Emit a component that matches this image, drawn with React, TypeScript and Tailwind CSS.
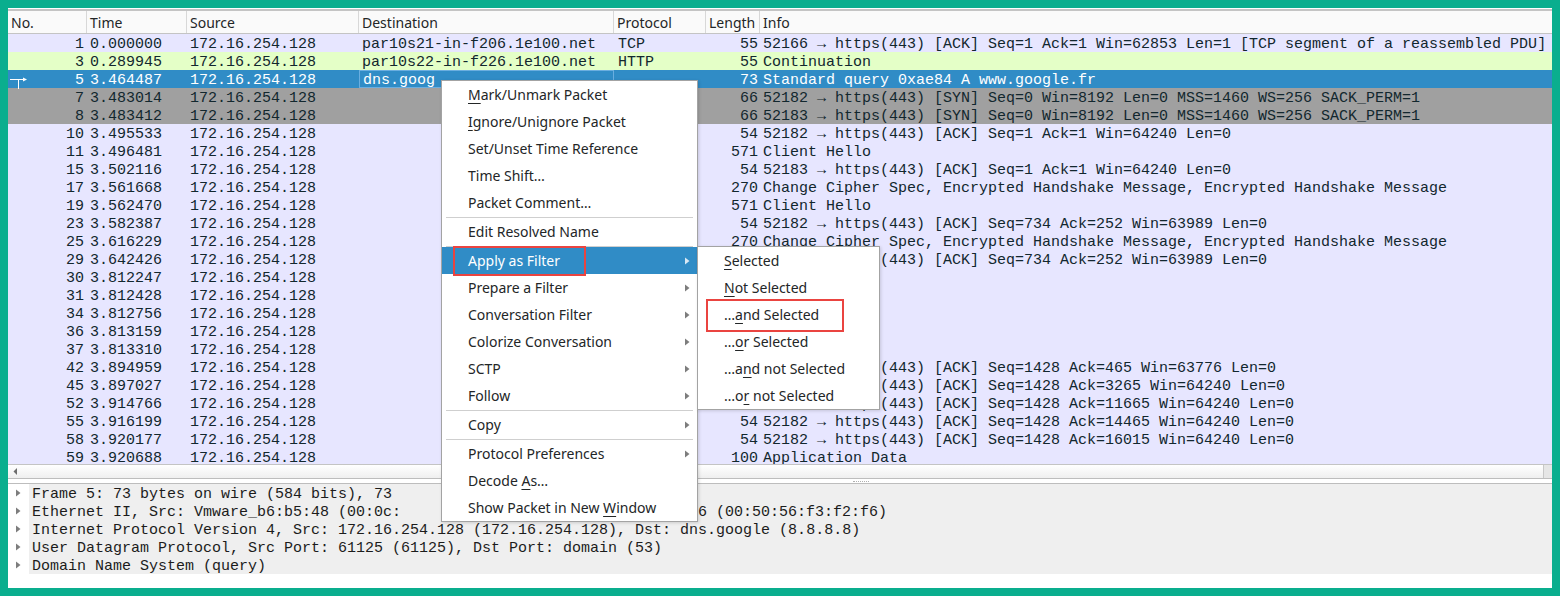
import React from "react";

type Kind = "tcp" | "http" | "sel" | "syn";

type Packet = {
  no: string;
  time: string;
  dst: string;
  proto: string;
  len: string;
  info: string;
  kind: Kind;
};

const SRC = "172.16.254.128";

const packets: Packet[] = [
  { no: "1", time: "0.000000", dst: "par10s21-in-f206.1e100.net", proto: "TCP", len: "55", info: "52166 → https(443) [ACK] Seq=1 Ack=1 Win=62853 Len=1 [TCP segment of a reassembled PDU]", kind: "tcp" },
  { no: "3", time: "0.289945", dst: "par10s22-in-f226.1e100.net", proto: "HTTP", len: "55", info: "Continuation", kind: "http" },
  { no: "5", time: "3.464487", dst: "dns.goog", proto: "", len: "73", info: "Standard query 0xae84 A www.google.fr", kind: "sel" },
  { no: "7", time: "3.483014", dst: "", proto: "TCP", len: "66", info: "52182 → https(443) [SYN] Seq=0 Win=8192 Len=0 MSS=1460 WS=256 SACK_PERM=1", kind: "syn" },
  { no: "8", time: "3.483412", dst: "", proto: "TCP", len: "66", info: "52183 → https(443) [SYN] Seq=0 Win=8192 Len=0 MSS=1460 WS=256 SACK_PERM=1", kind: "syn" },
  { no: "10", time: "3.495533", dst: "", proto: "TCP", len: "54", info: "52182 → https(443) [ACK] Seq=1 Ack=1 Win=64240 Len=0", kind: "tcp" },
  { no: "11", time: "3.496481", dst: "", proto: "TLSv1.2", len: "571", info: "Client Hello", kind: "tcp" },
  { no: "15", time: "3.502116", dst: "", proto: "TCP", len: "54", info: "52183 → https(443) [ACK] Seq=1 Ack=1 Win=64240 Len=0", kind: "tcp" },
  { no: "17", time: "3.561668", dst: "", proto: "TLSv1.2", len: "270", info: "Change Cipher Spec, Encrypted Handshake Message, Encrypted Handshake Message", kind: "tcp" },
  { no: "19", time: "3.562470", dst: "", proto: "TLSv1.2", len: "571", info: "Client Hello", kind: "tcp" },
  { no: "23", time: "3.582387", dst: "", proto: "TCP", len: "54", info: "52182 → https(443) [ACK] Seq=734 Ack=252 Win=63989 Len=0", kind: "tcp" },
  { no: "25", time: "3.616229", dst: "", proto: "TLSv1.2", len: "270", info: "Change Cipher Spec, Encrypted Handshake Message, Encrypted Handshake Message", kind: "tcp" },
  { no: "29", time: "3.642426", dst: "", proto: "TCP", len: "54", info: "52183 → https(443) [ACK] Seq=734 Ack=252 Win=63989 Len=0", kind: "tcp" },
  { no: "30", time: "3.812247", dst: "", proto: "TLSv1.2", len: "", info: "", kind: "tcp" },
  { no: "31", time: "3.812428", dst: "", proto: "TLSv1.2", len: "", info: "", kind: "tcp" },
  { no: "34", time: "3.812756", dst: "", proto: "TLSv1.2", len: "", info: "", kind: "tcp" },
  { no: "36", time: "3.813159", dst: "", proto: "TLSv1.2", len: "", info: "", kind: "tcp" },
  { no: "37", time: "3.813310", dst: "", proto: "TLSv1.2", len: "", info: "", kind: "tcp" },
  { no: "42", time: "3.894959", dst: "", proto: "TCP", len: "54", info: "52182 → https(443) [ACK] Seq=1428 Ack=465 Win=63776 Len=0", kind: "tcp" },
  { no: "45", time: "3.897027", dst: "", proto: "TCP", len: "54", info: "52182 → https(443) [ACK] Seq=1428 Ack=3265 Win=64240 Len=0", kind: "tcp" },
  { no: "52", time: "3.914766", dst: "", proto: "TCP", len: "54", info: "52182 → https(443) [ACK] Seq=1428 Ack=11665 Win=64240 Len=0", kind: "tcp" },
  { no: "55", time: "3.916199", dst: "", proto: "TCP", len: "54", info: "52182 → https(443) [ACK] Seq=1428 Ack=14465 Win=64240 Len=0", kind: "tcp" },
  { no: "58", time: "3.920177", dst: "", proto: "TCP", len: "54", info: "52182 → https(443) [ACK] Seq=1428 Ack=16015 Win=64240 Len=0", kind: "tcp" },
  { no: "59", time: "3.920688", dst: "", proto: "TLSv1.2", len: "100", info: "Application Data", kind: "tcp" },
];

const rowColor: Record<Kind, string> = {
  tcp: "bg-[#e7e6ff] text-[#12272e]",
  http: "bg-[#e4ffc7] text-[#12272e]",
  syn: "bg-[#a0a0a0] text-[#12272e]",
  sel: "bg-[#308cc6] text-white",
};

// [visible text, text resuming right of the context menu]
const details: [string, string][] = [
  ["Frame 5: 73 bytes on wire (584 bits), 73", ""],
  ["Ethernet II, Src: Vmware_b6:b5:48 (00:0c:", "6 (00:50:56:f3:f2:f6)"],
  ["Internet Protocol Version 4, Src: 172.16.254.128 (172.16.254.128), Dst: dns.google (8.8.8.8)", ""],
  ["User Datagram Protocol, Src Port: 61125 (61125), Dst Port: domain (53)", ""],
  ["Domain Name System (query)", ""],
];

const cols = "grid grid-cols-[79px_100px_172px_255px_92px_54px_1fr]";

function Arrow({ white }: { white?: boolean }) {
  return (
    <svg width="5" height="8" viewBox="0 0 5 8" className="shrink-0">
      <path d="M0 0.5 L4.5 4 L0 7.5 Z" fill={white ? "#d8e8f4" : "#7d7d7d"} />
    </svg>
  );
}

function RelatedIcon() {
  return (
    <svg width="20" height="18" viewBox="0 0 20 18" className="shrink-0">
      <path d="M2 8.5 H16" stroke="white" strokeWidth="1" />
      <path d="M10.5 8.5 V18" stroke="white" strokeWidth="1" />
      <path d="M15 6.5 L19 8.5 L15 10.5 Z" fill="white" />
    </svg>
  );
}

function Mn({ children }: { children: React.ReactNode }) {
  return <span className="underline decoration-1 underline-offset-[3px]">{children}</span>;
}

function MenuItem({
  children,
  arrow,
  active,
}: {
  children: React.ReactNode;
  arrow?: boolean;
  active?: boolean;
}) {
  return (
    <div
      className={`flex h-[27px] items-center justify-between pl-[26px] pr-[7px] ${
        active ? "bg-[#308cc6] text-white" : "text-[#232627]"
      }`}
    >
      <span className="whitespace-pre">{children}</span>
      {arrow && <Arrow white={active} />}
    </div>
  );
}

function Sep() {
  return (
    <div className="flex h-[2px] items-center px-[4px]">
      <div className="h-px w-full bg-[#cfcfcf]" />
    </div>
  );
}

export default function App() {
  return (
    <div className="relative h-[596px] w-[1560px] overflow-hidden bg-[#0aae8e] p-2">
      <div className="flex h-full flex-col bg-white pt-px font-['Liberation_Mono',monospace] text-[15px]">
        {/* column header */}
        <div
          className={`${cols} h-[25px] shrink-0 border-t-2 border-b border-[#c4c4c4] bg-[#fafafa] font-['Noto_Sans',sans-serif] text-[14px] text-[#232627]`}
        >
          {["No.", "Time", "Source", "Destination", "Protocol", "Length", "Info"].map((h, i) => (
            <div
              key={h}
              className={`flex items-center pl-[3px] pt-px ${i < 6 ? "border-r border-[#d8d8d8]" : ""}`}
            >
              {h}
            </div>
          ))}
        </div>

        {/* packet list */}
        <div className="h-[430px] shrink-0 overflow-hidden">
          {packets.map((p) => (
            <div key={p.no} className={`${cols} h-[18px] pt-px leading-[19px] ${rowColor[p.kind]}`}>
              <div className="flex justify-between pr-[3px]">
                {p.kind === "sel" ? <RelatedIcon /> : <span />}
                <span>{p.no}</span>
              </div>
              <div className="pl-[3px]">{p.time}</div>
              <div className="pl-[3px]">{SRC}</div>
              <div
                className={`overflow-hidden whitespace-pre pl-[3px] ${
                  p.kind === "sel" ? "-mt-px h-[18px] border border-[#6aaee0] pt-px leading-[17px]" : ""
                }`}
              >
                {p.dst}
              </div>
              <div className="pl-[4px]">{p.proto}</div>
              <div className="pr-[2px] text-right">{p.len}</div>
              <div className="overflow-hidden whitespace-pre pl-[3px]">{p.info}</div>
            </div>
          ))}
        </div>

        {/* horizontal scrollbar */}
        <div className="flex h-[14px] shrink-0 items-center border-t border-[#c4c4c4] bg-gradient-to-b from-white to-[#efefef]">
          <svg width="14" height="13" viewBox="0 0 14 13" className="ml-[2px]">
            <path d="M7 3 L3.5 6.5 L7 10 Z" fill="#6d6d6d" />
          </svg>
          <div className="flex-1" />
          <div className="h-full w-[9px] border-l border-[#c8c8c8] bg-[#e6e6e6]" />
        </div>

        {/* splitter */}
        <div className="flex h-[6px] shrink-0 items-center border-y border-[#bdbdbd] bg-white">
          <div className="ml-[845px] h-px w-[16px] border-t border-dotted border-[#b0b0b0]" />
        </div>

        {/* packet details */}
        <div className="flex h-[90px] shrink-0 flex-col text-[#1c1c1c]">
          {details.map(([d, tail]) => (
            <div key={d} className="flex h-[18px]">
              <div className="flex w-[21px] items-center justify-end pr-[8px]">
                <Arrow />
              </div>
              <div className="flex flex-1 overflow-hidden whitespace-pre bg-[#efefef] pl-[3px] pt-px leading-[19px]">
                <span className="w-[369px] shrink-0">{d}</span>
                {tail && <span className="ml-[297px]">{tail}</span>}
              </div>
            </div>
          ))}
        </div>
        <div className="flex-1" />
      </div>

      {/* context menu */}
      <div className="absolute left-[441px] top-[80px] w-[257px] border border-[#a3a3a3] bg-white font-['Noto_Sans',sans-serif] text-[14px] shadow-[1px_1px_3px_rgba(0,0,0,0.15)]">
        <MenuItem>
          <Mn>M</Mn>ark/Unmark Packet
        </MenuItem>
        <MenuItem>
          <Mn>I</Mn>gnore/Unignore Packet
        </MenuItem>
        <MenuItem>Set/Unset Time Reference</MenuItem>
        <MenuItem>Time Shift…</MenuItem>
        <MenuItem>Packet Comment…</MenuItem>
        <Sep />
        <MenuItem>Edit Resolved Name</MenuItem>
        <Sep />
        <MenuItem arrow active>
          Apply as Filter
        </MenuItem>
        <MenuItem arrow>Prepare a Filter</MenuItem>
        <MenuItem arrow>Conversation Filter</MenuItem>
        <MenuItem arrow>Colorize Conversation</MenuItem>
        <MenuItem arrow>SCTP</MenuItem>
        <MenuItem arrow>Follow</MenuItem>
        <Sep />
        <MenuItem arrow>Copy</MenuItem>
        <Sep />
        <MenuItem arrow>Protocol Preferences</MenuItem>
        <MenuItem>
          Decode <Mn>A</Mn>s…
        </MenuItem>
        <MenuItem>
          Show Packet in New <Mn>W</Mn>indow
        </MenuItem>
      </div>

      {/* submenu */}
      <div className="absolute left-[697px] top-[246px] w-[183px] border border-[#a3a3a3] bg-white font-['Noto_Sans',sans-serif] text-[14px] text-[#232627] shadow-[1px_1px_3px_rgba(0,0,0,0.15)]">
        {[
          <>
            <Mn>S</Mn>elected
          </>,
          <>
            <Mn>N</Mn>ot Selected
          </>,
          <>
            …<Mn>a</Mn>nd Selected
          </>,
          <>
            …<Mn>o</Mn>r Selected
          </>,
          <>
            …a<Mn>n</Mn>d not Selected
          </>,
          <>
            …o<Mn>r</Mn> not Selected
          </>,
        ].map((c, i) => (
          <div key={i} className="flex h-[27px] items-center whitespace-pre pl-[26px]">
            {c}
          </div>
        ))}
      </div>

      {/* annotation boxes */}
      <div className="absolute left-[453px] top-[246px] h-[30px] w-[133px] border-2 border-[#ea4440]" />
      <div className="absolute left-[706px] top-[299px] h-[33px] w-[138px] border-2 border-[#ea4440]" />
    </div>
  );
}
